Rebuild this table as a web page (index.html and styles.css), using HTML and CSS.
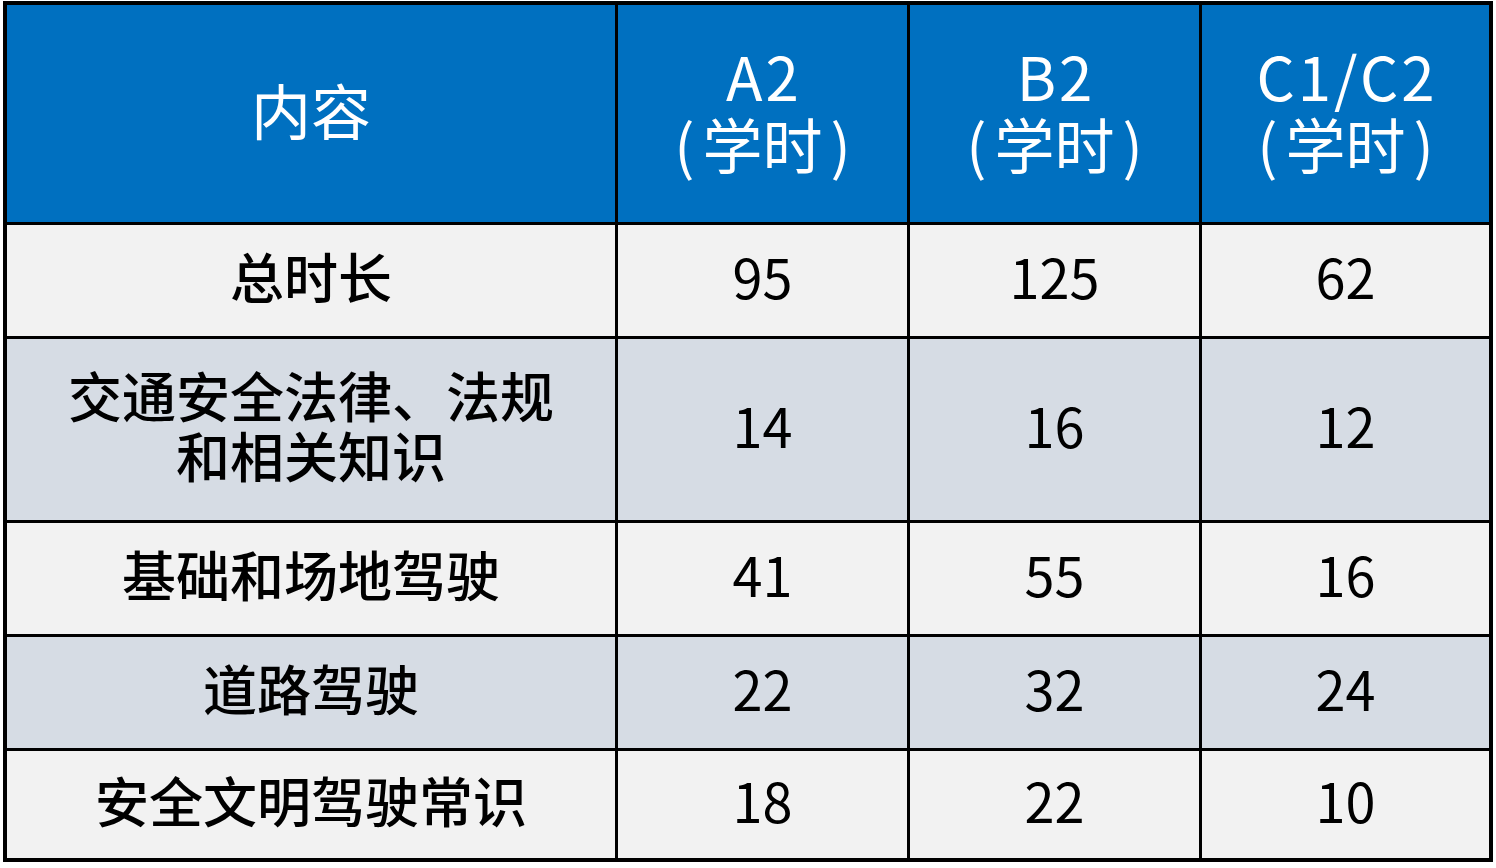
FILE: index.html
```html
<!DOCTYPE html>
<html lang="zh-CN">
<head>
<meta charset="utf-8">
<title>学时表</title>
<link rel="stylesheet" href="styles.css">
</head>
<body>
<div class="table">
  <div class="cell head"><span>内容</span></div>
  <div class="cell head"><span><span class="code">A2</span><br><span class="paren">(</span>学时<span class="paren">)</span></span></div>
  <div class="cell head"><span><span class="code">B2</span><br><span class="paren">(</span>学时<span class="paren">)</span></span></div>
  <div class="cell head"><span><span class="code">C1/C2</span><br><span class="paren">(</span>学时<span class="paren">)</span></span></div>

  <div class="cell light"><span>总时长</span></div>
  <div class="cell light num"><span>95</span></div>
  <div class="cell light num"><span>125</span></div>
  <div class="cell light num"><span>62</span></div>

  <div class="cell dark"><span>交通安全法律、法规<br>和相关知识</span></div>
  <div class="cell dark num"><span>14</span></div>
  <div class="cell dark num"><span>16</span></div>
  <div class="cell dark num"><span>12</span></div>

  <div class="cell light"><span>基础和场地驾驶</span></div>
  <div class="cell light num"><span>41</span></div>
  <div class="cell light num"><span>55</span></div>
  <div class="cell light num"><span>16</span></div>

  <div class="cell dark"><span>道路驾驶</span></div>
  <div class="cell dark num"><span>22</span></div>
  <div class="cell dark num"><span>32</span></div>
  <div class="cell dark num"><span>24</span></div>

  <div class="cell light"><span>安全文明驾驶常识</span></div>
  <div class="cell light num"><span>18</span></div>
  <div class="cell light num"><span>22</span></div>
  <div class="cell light num"><span>10</span></div>
</div>
</body>
</html>
```

FILE: styles.css
```css
html, body {
  margin: 0;
  padding: 0;
  background: #ffffff;
}

.table {
  box-sizing: border-box;
  margin: 1px 0 0 3px;
  width: 1490px;
  padding: 4px;
  background: #000000;
  display: grid;
  grid-template-columns: 608px 289px 289px 287px;
  grid-template-rows: 217px 111px 181px 111px 111px 107px;
  gap: 3px;
  font-family: "Noto Sans CJK SC", "Noto Sans", sans-serif;
}

.cell {
  box-sizing: border-box;
  display: flex;
  align-items: center;
  justify-content: center;
  text-align: center;
  color: #000000;
  font-size: 54px;
  font-weight: 500;
  line-height: 60px;
  padding-bottom: 9px;
}

.head {
  background: #0070c0;
  color: #ffffff;
  font-size: 60px;
  font-weight: 400;
  line-height: 68px;
  padding-bottom: 10px;
}

.code {
  letter-spacing: 3px;
  margin-right: -3px;
}

.paren {
  display: inline-block;
  margin: 0 8px;
}

.light {
  background: #f2f2f2;
}

.dark {
  background: #d6dce4;
}

.num {
  font-weight: 400;
}
```
